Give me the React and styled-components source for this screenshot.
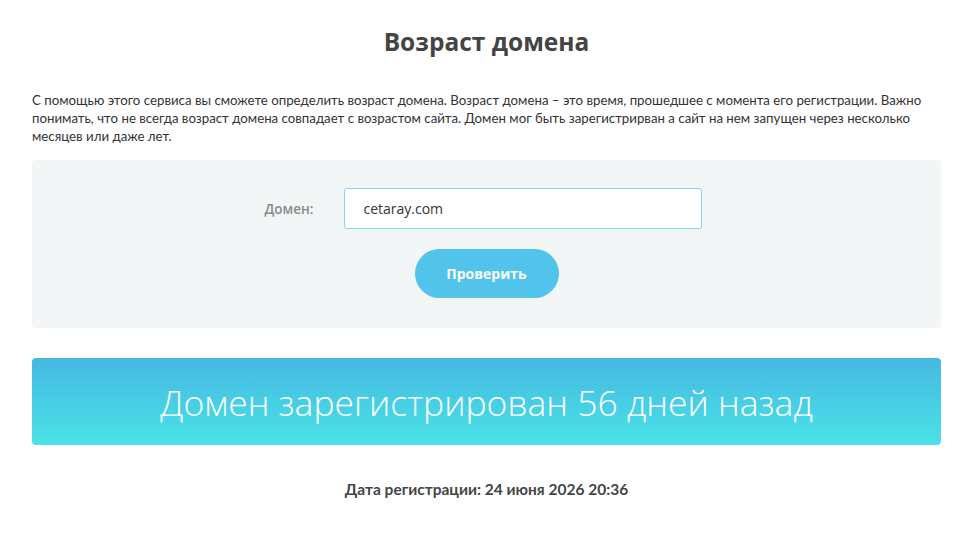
import { createGlobalStyle, styled } from "styled-components";

const GlobalStyle = createGlobalStyle`
    body {
        margin: 0;
        background: #fff;
        font-family: "Lato", "Open Sans", sans-serif;
        color: #333;
    }
`

const Page = styled.div`
    width: 909px;
    margin: 0 0 0 32px;
    padding-top: 25px;
    display: flex;
    flex-direction: column;
`

const Title = styled.h1`
    margin: 0;
    text-align: center;
    font-family: "Open Sans", sans-serif;
    font-size: 24.5px;
    font-weight: 700;
    color: #444;
    line-height: 34px;
`

const Intro = styled.p`
    margin: 32px 0 0;
    font-size: 13.25px;
    line-height: 18px;
    color: #333;
`

const FormPanel = styled.div`
    margin-top: 15px;
    height: 168px;
    background: #f3f6f7;
    border-radius: 4px;
    display: flex;
    flex-direction: column;
    align-items: center;
    padding-top: 28px;
    box-sizing: border-box;
`

const FieldRow = styled.div`
    display: flex;
    align-items: center;
    gap: 31px;
    margin-left: -6px;
`

const Label = styled.label`
    font-family: "Open Sans", sans-serif;
    font-size: 13.5px;
    font-weight: 600;
    color: #8a8a8a;
`

const Input = styled.input`
    width: 358px;
    height: 41px;
    box-sizing: border-box;
    border: 1.5px solid #86d3ef;
    border-radius: 3px;
    padding: 0 18px;
    font-family: "Open Sans", sans-serif;
    font-size: 14px;
    color: #333;
    background: #fff;
    outline: none;
`

const Button = styled.button`
    margin-top: 20px;
    width: 144px;
    height: 49px;
    border: none;
    border-radius: 25px;
    background: #52c3ea;
    color: #fff;
    font-family: "Open Sans", sans-serif;
    font-size: 14px;
    font-weight: 700;
    cursor: pointer;
`

const ResultBanner = styled.div`
    margin-top: 30px;
    height: 87px;
    border-radius: 4px;
    background: linear-gradient(180deg, #45b8e3 0%, #4ae3e6 100%);
    display: flex;
    align-items: center;
    justify-content: center;
    color: #fff;
    font-family: "Open Sans", sans-serif;
    font-size: 35.5px;
    font-weight: 300;
`

const RegDate = styled.div`
    margin-top: 35px;
    text-align: center;
    font-size: 15.5px;
    font-weight: 700;
    color: #444;
`

export default function App() {
    return <>
        <GlobalStyle />
        <Page>
            <Title>Возраст домена</Title>
            <Intro>
                С помощью этого сервиса вы сможете определить возраст домена. Возраст домена – это время, прошедшее с момента его регистрации. Важно понимать, что не всегда возраст домена совпадает с возрастом сайта. Домен мог быть зарегистрирван а сайт на нем запущен через несколько месяцев или даже лет.
            </Intro>
            <FormPanel>
                <FieldRow>
                    <Label htmlFor="domain">Домен:</Label>
                    <Input id="domain" defaultValue="cetaray.com" />
                </FieldRow>
                <Button>Проверить</Button>
            </FormPanel>
            <ResultBanner>Домен зарегистрирован 56 дней назад</ResultBanner>
            <RegDate>Дата регистрации: 24 июня 2026 20:36</RegDate>
        </Page>
    </>
}
